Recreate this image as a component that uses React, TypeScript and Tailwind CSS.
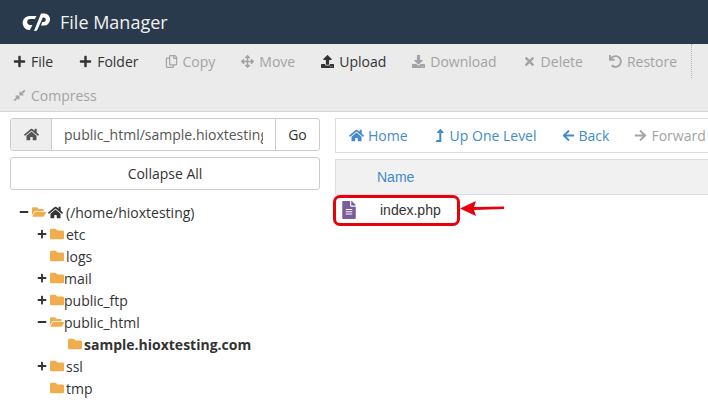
import React from "react";
import { FaPlus, FaRegCopy, FaArrowsAlt, FaDownload, FaUpload, FaTimes, FaUndo, FaCompressAlt, FaHome, FaArrowLeft, FaArrowRight, FaLevelUpAlt, FaFolder, FaFolderOpen, FaFileAlt, FaMinus } from "react-icons/fa";

const Logo = () => (
  <svg width="30" height="20" viewBox="0 0 30 20" className="block">
    <path d="M9 4h6.5l-1.6 3H9.2a3 3 0 0 0 0 6h2.2L8.8 18H8.2A7 7 0 0 1 9 4z" fill="#fff" />
    <path d="M13 19 L20 1.500h3.500a6 6 0 0 1 5.500 6.500a6 6 0 0 1-6 5.500h-3l1.300-3.500h1.700a2.300 2.300 0 0 0 0-4.500h-1.200L16.500 17.500a2.500 2.500 0 0 1-2.300 1.500z" fill="#fff" />
  </svg>
);

function Tool({ icon, label, off, className = "" }: { icon: React.ReactNode; label: string; off?: boolean; className?: string }) {
  return (
    <div className={`flex items-center h-[34px] gap-[5px] ${off ? "text-[#a3a3a3]" : "text-[#333]"} ${className}`}>
      <span className="w-[13px] flex justify-center text-[13px]">{icon}</span>
      <span>{label}</span>
    </div>
  );
}

function Row({ depth, mark, open, label, icon, bold, gap = 7 }: { depth: number; mark?: "plus" | "minus"; open?: boolean; label: string; icon?: boolean; bold?: boolean; gap?: number }) {
  return (
    <div className="flex items-center h-[22px]" style={{ paddingLeft: depth }}>
      <span className="w-[12px] flex justify-center text-[10px] text-[#333]">{mark === "plus" ? <FaPlus /> : mark === "minus" ? <FaMinus /> : null}</span>
      <span className="w-[15px] ml-[1px] flex justify-center text-[#f0ad4e] text-[14px]">{open ? <FaFolderOpen /> : <FaFolder />}</span>
      {icon && <FaHome className="ml-[2px] text-[15px] text-[#333]" />}
      <span className={bold ? "font-bold text-[#333]" : "text-[#333]"} style={{ marginLeft: gap - 5 }}>{label}</span>
    </div>
  );
}

export default function App() {
  return (
    <div className="relative w-[708px] h-[411px] overflow-hidden bg-white text-[14px] font-['Open_Sans',sans-serif]">
      <header className="h-[44px] bg-[#2a3a4d] flex items-center pl-[21px] gap-[9px] text-white text-[18px]">
        <Logo />
        <span className="text-[#f1f1f1]">File Manager</span>
      </header>

      <div className="h-[68px] bg-[#ebebeb] border-b border-[#d5d8da] pl-[13px]">
        <div className="flex items-center h-[34px] gap-[26px]">
          <Tool icon={<FaPlus />} label="File" />
          <Tool icon={<FaPlus />} label="Folder" />
          <Tool off icon={<FaRegCopy />} label="Copy" />
          <Tool off icon={<FaArrowsAlt />} label="Move" />
          <Tool icon={<FaUpload />} label="Upload" />
          <Tool off icon={<FaDownload />} label="Download" />
          <Tool off icon={<FaTimes />} label="Delete" />
          <Tool off icon={<FaUndo />} label="Restore" />
          <div className="h-[34px] border-l border-dotted border-[#b5b5b5] -ml-[12px]" />
          <div className="w-[10px] h-[14px] bg-[#a3a3a3] ml-[-9px]" />
        </div>
        <Tool off icon={<FaCompressAlt />} label="Compress" />
      </div>

      <div className="flex pt-[6px]">
        <aside className="w-[310px] ml-[10px] shrink-0">
          <div className="flex h-[33px] border border-[#ccc] rounded-[3px] text-[#555]">
            <div className="w-[41px] bg-[#eee] border-r border-[#ccc] flex items-center justify-center rounded-l-[3px]"><FaHome className="text-[15px]" /></div>
            <div className="flex-1 px-[12px] flex items-center overflow-hidden whitespace-nowrap"><span className="block w-[199px] overflow-hidden">public_html/sample.hioxtesting.com</span></div>
            <div className="w-[44px] border-l border-[#ccc] flex items-center justify-center text-[#333]">Go</div>
          </div>
          <div className="mt-[6px] h-[33px] border border-[#ccc] rounded-[3px] flex items-center justify-center text-[#333]">Collapse All</div>
          <div className="mt-[11px] text-[14px]">
            <Row depth={8} mark="minus" open label="(/home/hioxtesting)" icon gap={8} />
            <Row depth={26} mark="plus" label="etc" gap={7} />
            <Row depth={26} label="logs" gap={7} />
            <Row depth={26} mark="plus" label="mail" gap={5} />
            <Row depth={26} mark="plus" label="public_ftp" gap={5} />
            <Row depth={26} mark="minus" open label="public_html" gap={5} />
            <Row depth={44} label="sample.hioxtesting.com" bold gap={7} />
            <Row depth={26} mark="plus" label="ssl" gap={7} />
            <Row depth={26} label="tmp" gap={7} />
          </div>
        </aside>

        <main className="ml-[15px] flex-1">
          <div className="h-[35px] border border-r-0 border-[#ddd] flex items-center pl-[13px] gap-[25px] text-[#428bca]">
            <span className="flex items-center gap-[4px]"><FaHome className="text-[15px]" />Home</span>
            <span className="flex items-center gap-[4px]"><FaLevelUpAlt className="text-[13px]" />Up One Level</span>
            <span className="flex items-center gap-[4px]"><FaArrowLeft className="text-[13px]" />Back</span>
            <span className="flex items-center gap-[4px] text-[#a3a3a3]"><FaArrowRight className="text-[13px]" />Forward</span>
          </div>
          <div className="mt-[6px] h-[36px] bg-[#f1f1f1] border border-r-0 border-[#ddd] flex items-center pl-[41px] text-[#428bca] font-['Liberation_Sans',sans-serif]">Name</div>
          <div className="h-[30px] flex items-center pl-[5px]">
            <FaFileAlt className="text-[#7a5c99] text-[18px]" />
            <span className="ml-[22px] text-[#333] font-['Liberation_Sans',sans-serif]">index.php</span>
          </div>
        </main>
      </div>

      <div className="absolute left-[333px] top-[195px] w-[127px] h-[31px] border-[3px] border-[#e8000d] rounded-[7px]" />
      <svg className="absolute left-[460px] top-[198px]" width="46" height="20" viewBox="0 0 46 20">
        <path d="M0 10.500 L16 3 L14 9 L44 8.500 L44 11 L14 12 L16 18 Z" fill="#e8000d" />
      </svg>
    </div>
  );
}
